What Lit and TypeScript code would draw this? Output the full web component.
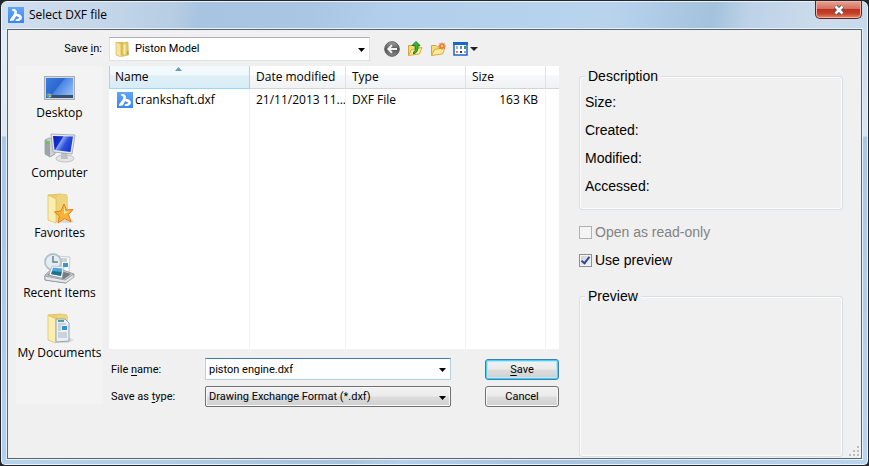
import { LitElement, html, css, svg } from "lit";
import { customElement, property, state } from "lit/decorators.js";

const brandIcon = html`<svg class="icon" width="16" height="16" viewBox="0 0 16 16" aria-hidden="true">
  <defs><linearGradient id="b" x1="0" y1="0" x2="0" y2="1"><stop offset="0" stop-color="#62a6f6"/><stop offset="1" stop-color="#3a86f2"/></linearGradient></defs>
  <rect width="16" height="16" fill="url(#b)"/>
  <path d="M4.200 2 L7 2 L9 4.200 L8.600 6.400 L12 7.600 L14 9.800 L13.600 12.200 L11 14 L7.600 14 L7.600 12.400 L10.600 11.600 L11.200 10.400 L8.200 9 L5.600 13.400 L2 14 L2 12.600 L6 7 L6.400 4.800 L4.200 3.600Z" fill="#fff"/>
</svg>`;

const folderShape = svg`
  <path d="M4 3 L17 2 L18 26 L6 29 L4 28Z" fill="#e9cf6c"/>
  <path d="M13 3 L22 3 Q24 3 24 5 L24 27 L12 30Z" fill="#ecd57c"/>
  <path d="M4 3 L12 7 L12 31 L4 28Z" fill="#fbeeb0" stroke="#dcbd58" stroke-width=".7"/>
  <path d="M4 3 L17 2 L23 3" fill="none" stroke="#d9bc5c" stroke-width=".8"/>`;

const placeIcons: Record<string, unknown> = {
  desktop: html`<svg width="32" height="32" viewBox="0 0 32 32" aria-hidden="true">
    <defs><linearGradient id="d" x1="0" y1="0" x2="1" y2=".6"><stop offset="0" stop-color="#3f7fdc"/><stop offset=".5" stop-color="#2c66cf"/><stop offset=".55" stop-color="#4c86e2"/><stop offset="1" stop-color="#8ab7f2"/></linearGradient></defs>
    <rect x=".5" y="4.500" width="30" height="23" fill="#d3d7dc" stroke="#a9aeb6"/>
    <rect x="2" y="6" width="27" height="20" fill="url(#d)"/>
    <rect x="2" y="23" width="27" height="3" fill="#39506c"/>
    <circle cx="5" cy="23.500" r="2.600" fill="#3d9fd0"/><path d="M3.500 22h1.500v1.500H3.500z" fill="#f08040"/><path d="M5.300 22h1.500v1.500H5.300z" fill="#9bd84c"/><path d="M5.300 24h1.500v1H5.300z" fill="#f6d44c"/>
  </svg>`,
  computer: html`<svg width="32" height="32" viewBox="0 0 32 32" aria-hidden="true">
    <defs><linearGradient id="c" x1="0" y1="0" x2="1" y2=".5"><stop offset="0" stop-color="#0c1fb4"/><stop offset=".4" stop-color="#1330cf"/><stop offset=".45" stop-color="#86a4f4"/><stop offset=".7" stop-color="#2c4fdc"/><stop offset="1" stop-color="#1a3bd0"/></linearGradient></defs>
    <path d="M1 8 L5 6 L11 7 L11 22 L6 25 L1 22Z" fill="#cfd2d3" stroke="#92979b" stroke-width=".8"/>
    <path d="M1 8 L6 9 L6 25 L1 22Z" fill="#9ea4a6"/><path d="M2 10 h3 v2 h-3z" fill="#55cf4a"/>
    <ellipse cx="21" cy="26.500" rx="9" ry="3.500" fill="#e3e5e7" stroke="#b2b6ba" stroke-width=".8"/>
    <path d="M17 20 L23 21 L24 27 L17 27Z" fill="#bcc0c4"/>
    <path d="M7 2 L31 3 L28 22 L9 20Z" fill="#e6e8ea" stroke="#9ba1a8" stroke-width=".8"/>
    <path d="M9 4 L29 4.500 L26.500 20 L10.500 18Z" fill="url(#c)"/>
  </svg>`,
  favorites: html`<svg width="32" height="32" viewBox="0 0 32 32" aria-hidden="true">
    <path d="M10 30 L26 26 L30 30 L24 31Z" fill="#d8d8d8"/>${folderShape}
    <path d="M20 12 L22.500 18 L29 17.500 L24.500 22.500 L27 30 L20.500 26.500 L14 31 L15.500 24 L10.500 20 L17 19Z" fill="#fbb238" stroke="#e0801c" stroke-width="1"/>
    <path d="M20 14 L21.500 20 L26 19 L20 22Z" fill="#fff0b0"/>
  </svg>`,
  recent: html`<svg width="32" height="32" viewBox="0 0 32 32" aria-hidden="true">
    <path d="M13 4 L26 5 L25 22 L12 20Z" fill="#f8f9fa" stroke="#b5babd" stroke-width=".7"/>
    <path d="M15 7h8M15 9h8M15 11h3M15 13h3" stroke="#9aa2a8" stroke-width=".9"/><path d="M19 11h5v4h-5z" fill="#3d94c8"/>
    <circle cx="9" cy="10" r="8" fill="#e4edf3" stroke="#b3c0ca" stroke-width="1.800"/><path d="M9 4v6h5" fill="none" stroke="#6b7f90" stroke-width="1.500"/>
    <path d="M1 23 L10 15 L30 22 L22 31 L1 28Z" fill="#c9cccf" stroke="#868c91" stroke-width=".8"/>
    <path d="M3 23 L10 17 L27 22 L20 27Z" fill="#767c82"/>
    <path d="M8 14 L20 15 L18 26 L5 23Z" fill="#fff" stroke="#a2a8ad" stroke-width=".6"/>
    <path d="M9 15.500 L18.500 16.500 L17 24 L7 22Z" fill="#4aa7dd"/><path d="M8.500 19 L17.500 20 L17 24 L7 22Z" fill="#236f8c"/>
    <path d="M1 24 L21 28 L30 22 L30 25 L22 31 L1 28Z" fill="#e7e8ea" stroke="#858b90" stroke-width=".7"/>
  </svg>`,
  documents: html`<svg width="32" height="32" viewBox="0 0 32 32" aria-hidden="true">
    <path d="M12 31 L24 25 L30 28 L24 31Z" fill="#d9d9d9"/>${folderShape}
    <path d="M12 7 L21 7 L25 11 L25 29 L12 30Z" fill="#eaf0f5" stroke="#8f9ba8" stroke-width=".9"/>
    <path d="M14 9h6" stroke="#2f8690" stroke-width="1.600"/><path d="M14 12h8M14 14h3M14 16h3M14 18h3M14 21h9M14 23h9M14 25h9" stroke="#a4afba" stroke-width=".9"/>
    <path d="M18 14h5v4h-5z" fill="#3591cb"/>
  </svg>`,
};

const smallFolder = html`<svg class="icon" width="16" height="16" viewBox="0 0 16 16" aria-hidden="true">
  <path d="M1 1 L8 1 L8 14 L4 15 L1 14Z" fill="#dfc25a"/><path d="M7 2 L13 1 L13.500 14 L7 15.500Z" fill="#e3c764" stroke="#c9a844" stroke-width=".5"/>
  <path d="M1 1 L6 3 L6 16 L1 14Z" fill="#f6e49a" stroke="#d2b24e" stroke-width=".6"/><path d="M8.500 3.500 L10.500 3 L10.500 13 L8.500 13.500Z" fill="#f8ecb0"/><path d="M12 10.500h1.500v3H12z" fill="#79a7a8"/>
</svg>`;

const arrow = html`<svg class="arrow" width="7" height="4" viewBox="0 0 7 4" aria-hidden="true"><path d="M0 0H7L3.500 4Z" fill="#000"/></svg>`;

const yellowFolder = svg`
  <path d="M1.500 14.500 V4.500 H6 L7.500 6 H13 V8" fill="#f6dc7c" stroke="#d3a63a"/>
  <path d="M1.500 14.500 L4.500 8.500 L15 6.500 L12.500 13Z" fill="#fdeb9c" stroke="#d9ac40"/>`;

const toolIcons = {
  back: html`<svg width="16" height="16" viewBox="0 0 16 16" aria-hidden="true">
    <defs><linearGradient id="k" x1="0" y1="0" x2="0" y2="1"><stop offset="0" stop-color="#a4a4a4"/><stop offset=".5" stop-color="#565656"/><stop offset="1" stop-color="#8a8a8a"/></linearGradient></defs>
    <circle cx="8" cy="8" r="7.300" fill="url(#k)" stroke="#5e5e5e"/><path d="M13 8H4.500M8 4.200L4.300 8L8 11.800" fill="none" stroke="#f4f4f4" stroke-width="2"/></svg>`,
  up: html`<svg width="16" height="16" viewBox="0 0 16 16" aria-hidden="true">${yellowFolder}
    <path d="M6.500 11 Q9 10.500 8 4.500 H5 L9 .5 L13 4.500 H11 Q11.500 11.500 6.500 13Z" fill="#35b432" stroke="#15801c" stroke-width=".9"/></svg>`,
  create: html`<svg width="16" height="16" viewBox="0 0 16 16" aria-hidden="true">${yellowFolder}
    <path d="M12 1.500v7M8.500 5h7M9.500 2.500l5 5M14.500 2.500l-5 5" stroke="#f0603c" stroke-width="1.300"/><circle cx="12" cy="5" r="1.500" fill="#ffd83c"/></svg>`,
  views: html`<svg width="25" height="16" viewBox="0 0 25 16" aria-hidden="true">
    <rect x="1" y="2" width="13" height="12" fill="#fff" stroke="#1668cc" stroke-width="1.500"/><path d="M0 1h15v3H0z" fill="#1668cc"/>
    <path d="M3 5h2v3H3z" fill="#a7aebc"/><path d="M7 5h2v3H7z" fill="#6c82b4"/><path d="M11 5h2v3h-2z" fill="#3b9a4a"/>
    <path d="M3 10h2v2H3z" fill="#ee7b46"/><path d="M7 10h2v2H7z" fill="#26339a"/><path d="M11 10h2v2h-2z" fill="#a0a4ab"/>
    <path d="M17 6h8l-4 4Z" fill="#222"/></svg>`,
};

@customElement("group-box")
class GroupBox extends LitElement {
  @property() heading = "";
  static styles = css`
    :host { display: flex; font: 14px/16px "Liberation Sans", Arial, sans-serif; }
    .box { flex: 1; min-width: 0; margin: 0; padding: 4px 5px 9px; border: 1px solid #d5dfe5; border-radius: 3px; box-shadow: inset 0 0 0 1px #fafcfd; }
    .heading { padding: 0 3px; background: #f0f0f0; }
  `;
  render() {
    return html`<fieldset class="box"><legend class="heading">${this.heading}</legend><slot></slot></fieldset>`;
  }
}

@customElement("places-bar")
class PlacesBar extends LitElement {
  static styles = css`
    :host { display: flex; flex-direction: column; gap: 10px; padding-top: 6px; background: #f3f3f3; }
    .place { display: flex; flex-direction: column; align-items: center; padding: 0; border: 0; background: none; color: #000; font: inherit; line-height: 18px; white-space: nowrap; }
  `;
  private places = [
    ["desktop", "Desktop"],
    ["computer", "Computer"],
    ["favorites", "Favorites"],
    ["recent", "Recent Items"],
    ["documents", "My Documents"],
  ];
  render() {
    return this.places.map(([id, name]) => html`<button class="place">${placeIcons[id]}<span>${name}</span></button>`);
  }
}

@customElement("file-list")
class FileList extends LitElement {
  static styles = css`
    :host { display: flex; background: #fff; }
    .files { width: 100%; border-spacing: 0; table-layout: fixed; }
    .w-date { width: 96px; } .w-type { width: 120px; } .w-size { width: 80px; } .w-rest { width: 13px; }
    th, td { box-sizing: border-box; padding: 0 6px; text-align: left; font-weight: 400; white-space: nowrap; overflow: hidden; }
    th { height: 23px; border-right: 1px solid #dfe2e5; border-bottom: 1px solid #d5d5d5; background: linear-gradient(#fff 40%, #f7f8fa 40%, #f1f2f4); }
    th:last-child, td:last-child { border-right: 0; }
    .sorted { position: relative; border-color: #96d9f9; box-shadow: inset 1px 0 #96d9f9; background: linear-gradient(#f2f9fc 40%, #e1f1f9 40%, #d8ecf6); }
    .mark { position: absolute; top: 1px; left: 47%; }
    td { border-right: 1px solid #ebf4fe; }
    .entry td { height: 22px; }
    td.name { padding-left: 8px; }
    td.size { padding-right: 7px; text-align: right; }
    .file { display: flex; align-items: center; gap: 2px; }
  `;
  render() {
    return html`<table class="files">
      <colgroup><col /><col class="w-date" /><col class="w-type" /><col class="w-size" /><col class="w-rest" /></colgroup>
      <thead><tr>
        <th class="sorted" aria-sort="ascending">Name<svg class="mark" width="7" height="4" viewBox="0 0 7 4" aria-hidden="true"><path d="M0 4L3.500 0L7 4Z" fill="#6c9db5"/></svg></th>
        <th>Date modified</th><th>Type</th><th>Size</th><th></th>
      </tr></thead>
      <tbody>
        <tr class="entry"><td class="name"><span class="file">${brandIcon}crankshaft.dxf</span></td><td>21/11/2013 11...</td><td>DXF File</td><td class="size">163 KB</td><td></td></tr>
        <tr><td></td><td></td><td></td><td></td><td></td></tr>
      </tbody>
    </table>`;
  }
}

@customElement("app-root")
class AppRoot extends LitElement {
  @state() private fileName = "piston engine.dxf";
  @state() private preview = true;

  static styles = css`
    :host { display: flex; min-height: 100vh; background: #23262c; color: #000; font: 12px/16px "Open Sans", "Noto Sans", sans-serif; }
    *, *::before { box-sizing: border-box; }
    svg { display: block; flex: none; }
    .window { flex: 1; min-width: 0; display: flex; flex-direction: column; margin: 1px; padding: 0 5px 5px; border: 1px solid #e9f3fb; border-radius: 6px 6px 4px 4px;
      background: linear-gradient(#e4edf600 28px, #e4edf6 28px, #dce8f4 134px, #a9c7e6 135px, #b2cfec) left / 6px 100% no-repeat,
        linear-gradient(#d6e4f100 28px, #c9dcee 28px, #d5e5f3 134px, #a9c7e6 135px, #b9d4ee) right / 6px 100% no-repeat,
        linear-gradient(100deg, #d3e0ee, #c4d6e9 12%, #b7cde3 20%, #a7c4e1 23%, #a9c6e3 36%, #b1cfeb 44%, #b9d3ed 70%, #a3c2dc 82%, #bdd2e8 86%, #cddcea 95%, #c5daee) top / 100% 28px no-repeat,
        linear-gradient(90deg, #b7d2ed, #a6c3dc 40%, #b3d1ec 46%, #a5c3de 62%, #b9d4ee); }
    .title { display: flex; align-items: flex-start; height: 27px; padding-left: 1px; }
    .caption { flex: 1; display: flex; align-items: center; gap: 5px; padding-top: 5px; margin: 0; font-size: 12px; line-height: 16px; font-weight: 400; }
    .close { display: flex; align-items: center; justify-content: center; width: 47px; height: 18px; margin-top: -1px; padding: 0; border: 1px solid #5b2328; border-top: 0; border-radius: 0 0 5px 5px; box-shadow: inset 0 0 0 1px #f0b3a5; background: linear-gradient(#e7a596, #d5705e 45%, #b8341f 50%, #c8432c 75%, #e38a62); }
    .client { flex: 1; display: grid; grid-template-columns: minmax(0, 1fr) 264px; gap: 20px; padding: 0 18px 0 8px; border: 1px solid #59646f; box-shadow: 0 0 0 1px #e6f1fa; background: #f0f0f0; }
    .browse { display: flex; flex-direction: column; gap: 5px; padding: 7px 0 51px; }
    .lookin { display: flex; align-items: center; }
    .lookin label { width: 87px; margin-right: 6px; text-align: right; padding-right: 1px; }
    .small { font-family: Roboto, "Open Sans", sans-serif; font-size: 11px; }
    u { text-underline-offset: 2px; text-decoration-skip-ink: none; }
    .combo { position: relative; display: flex; min-width: 0; }
    .combo .arrow { position: absolute; right: 5px; top: 50%; margin-top: -1px; pointer-events: none; }
    .combo .icon { position: absolute; left: 6px; top: 4px; pointer-events: none; }
    .combo select, .combo input { flex: 1; min-width: 0; appearance: none; margin: 0; padding: 0 16px 0 3px; border-radius: 0; color: #000; font: inherit; outline: 0; }
    .folder { width: 48%; }
    .folder select { height: 24px; padding-left: 25px; border: 1px solid #dde2ea; border-top-color: #abadb3; background: #fff; }
    .tools { display: flex; gap: 7px; margin-left: 14px; }
    .tools button { padding: 0; border: 0; background: none; }
    .panes { flex: 1; display: grid; grid-template-columns: 87px minmax(0, 1fr); gap: 6px; }
    places-bar { margin-bottom: 3px; }
    .work { display: flex; flex-direction: column; gap: 9px; }
    file-list { flex: 1; }
    .form { display: grid; grid-template-columns: 94px minmax(0, 1fr) 74px; grid-auto-rows: 22px; align-items: end; row-gap: 5px; padding-left: 2px; }
    .form label { line-height: 20px; }
    .combo.name input { height: 22px; border: 1px solid #b5cfe7; border-top-color: #3d7bad; background: #fff; }
    .type select { height: 21px; border: 1px solid #707070; border-radius: 2px; box-shadow: inset 0 0 0 1px #fafafa; background: linear-gradient(#f2f2f2, #ebebeb 48%, #ddd 52%, #cfcfcf); }
    .push { height: 21px; padding: 0; border: 1px solid #707070; border-radius: 3px; box-shadow: inset 0 0 0 1px #fafafa; background: linear-gradient(#f2f2f2, #ebebeb 48%, #ddd 52%, #cfcfcf); color: #000; font: inherit; line-height: 18px; }
    .push.main { border-color: #3c7fb1; box-shadow: inset 0 0 0 1px #48d1f7, inset 0 0 0 2px #b5e8f8; }
    .combo.name, .combo.type { margin-right: 34px; }
    .details { position: relative; display: flex; flex-direction: column; padding: 38px 0 1px; font: 14px/28px "Liberation Sans", Arial, sans-serif; }
    .facts { margin: 0; line-height: 28px; }
    .facts dt { height: 28px; }
    .checks { display: flex; flex-direction: column; margin: 8px 0 14px; }
    .check { display: flex; align-items: center; gap: 3px; }
    .check.off { color: #838383; }
    .check input { appearance: none; width: 13px; height: 13px; margin: 0; border: 1px solid #8e8f8f; box-shadow: inset 0 0 0 1px #f4f4f4; background: linear-gradient(135deg, #cbcfd5, #f6f6f6); }
    .check input:disabled { border-color: #b1b1b1; background: #f4f4f4; }
    .check input:checked { display: grid; place-items: center; }
    .check input:checked::before { content: ""; width: 5px; height: 9px; margin-bottom: 2px; border: solid #31479e; border-width: 0 2px 2px 0; transform: rotate(38deg); }
    .preview { flex: 1; }
    .grip { position: absolute; right: -17px; bottom: 1px; }
  `;

  render() {
    return html`
      <main class="window">
        <header class="title">
          <h1 class="caption">${brandIcon}Select DXF file</h1>
          <button class="close" aria-label="Close">
            <svg width="12" height="10" viewBox="0 0 12 10" aria-hidden="true"><path d="M2.500 1.500L9.500 8.500M9.500 1.500L2.500 8.500" stroke="#5b4a5c" stroke-width="4.400"/><path d="M2.500 1.500L9.500 8.500M9.500 1.500L2.500 8.500" stroke="#fff" stroke-width="2.600"/></svg>
          </button>
        </header>
        <div class="client">
          <section class="browse">
            <div class="lookin small">
              <label for="folder">Save <u>i</u>n:</label>
              <div class="combo folder">${smallFolder}<select id="folder"><option>Piston Model</option></select>${arrow}</div>
              <div class="tools">
                <button aria-label="Back">${toolIcons.back}</button>
                <button aria-label="Up one level">${toolIcons.up}</button>
                <button aria-label="Create new folder">${toolIcons.create}</button>
                <button aria-label="Views">${toolIcons.views}</button>
              </div>
            </div>
            <div class="panes">
              <places-bar></places-bar>
              <div class="work">
                <file-list></file-list>
                <div class="form small">
                  <label for="file">File <u>n</u>ame:</label>
                  <div class="combo name"><input id="file" .value=${this.fileName} @input=${(e: Event) => (this.fileName = (e.target as HTMLInputElement).value)} />${arrow}</div>
                  <button class="push main"><u>S</u>ave</button>
                  <label for="type">Save as <u>t</u>ype:</label>
                  <div class="combo type"><select id="type"><option>Drawing Exchange Format (*.dxf)</option></select>${arrow}</div>
                  <button class="push">Cancel</button>
                </div>
              </div>
            </div>
          </section>
          <aside class="details">
            <group-box heading="Description">
              <dl class="facts"><dt>Size:</dt><dt>Created:</dt><dt>Modified:</dt><dt>Accessed:</dt></dl>
            </group-box>
            <div class="checks">
              <label class="check off"><input type="checkbox" disabled />Open as read-only</label>
              <label class="check"><input type="checkbox" .checked=${this.preview} @change=${() => (this.preview = !this.preview)} />Use preview</label>
            </div>
            <group-box class="preview" heading="Preview"></group-box>
            <svg class="grip" width="11" height="11" viewBox="0 0 11 11" aria-hidden="true"><path d="M8 0h2v2H8zM4 4h2v2H4zM8 4h2v2H8zM0 8h2v2H0zM4 8h2v2H4zM8 8h2v2H8z" fill="#bdbdbd"/></svg>
          </aside>
        </div>
      </main>
    `;
  }
}
